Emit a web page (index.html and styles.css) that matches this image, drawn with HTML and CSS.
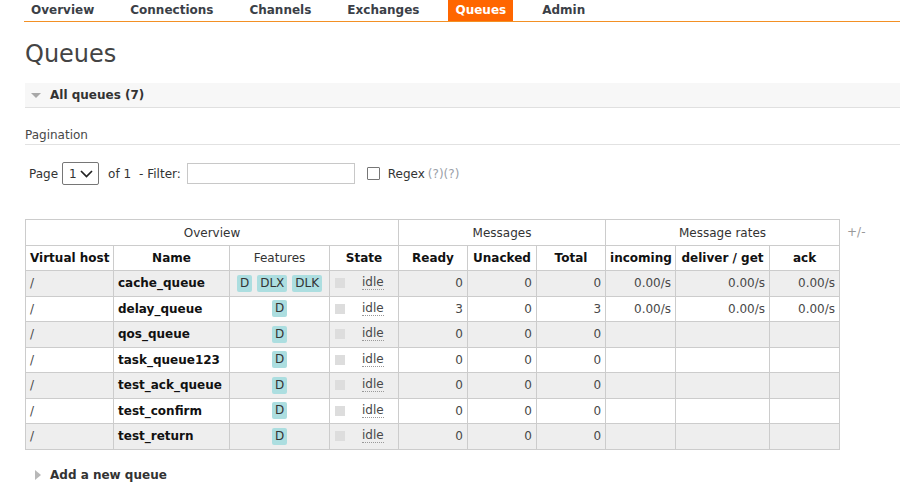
FILE: index.html
```html
<!DOCTYPE html>
<html>
<head>
<meta charset="utf-8">
<link rel="stylesheet" href="styles.css">
</head>
<body>
<div class="header">
  <ul class="tabs">
    <li><a class="tab">Overview</a></li>
    <li><a class="tab">Connections</a></li>
    <li><a class="tab">Channels</a></li>
    <li><a class="tab">Exchanges</a></li>
    <li><a class="tab selected">Queues</a></li>
    <li><a class="tab">Admin</a></li>
  </ul>
</div>
<div class="main">
  <h1 class="title">Queues</h1>
  <div class="section">
    <h2 class="section-head"><span class="tri-down"></span>All queues (7)</h2>
    <div class="section-body">
      <h3 class="sub-head">Pagination</h3>
      <div class="pager">
        <span class="lbl">Page</span>
        <span class="select"><span class="sel-val">1</span><svg class="chev" width="13" height="8" viewBox="0 0 13 8"><path d="M1 1 L6.5 6.5 L12 1" fill="none" stroke="#222" stroke-width="1.7"/></svg></span>
        <span class="lbl of">of 1</span>
        <span class="lbl filt">- Filter:</span>
        <span class="text-input"></span>
        <span class="check"></span>
        <span class="lbl regex">Regex</span>
        <span class="help">(?)(?)</span>
      </div>
      <div class="table-wrap">
        <table class="list">
          <colgroup>
            <col class="c-vhost"><col class="c-name"><col class="c-feat"><col class="c-state">
            <col class="c-num"><col class="c-num"><col class="c-num">
            <col class="c-inc"><col class="c-del"><col class="c-ack">
          </colgroup>
          <thead>
            <tr class="grp">
              <th colspan="4">Overview</th>
              <th colspan="3">Messages</th>
              <th colspan="3">Message rates</th>
            </tr>
            <tr class="cols">
              <th>Virtual host</th><th>Name</th><th class="norm">Features</th><th>State</th>
              <th>Ready</th><th>Unacked</th><th>Total</th>
              <th>incoming</th><th>deliver / get</th><th>ack</th>
            </tr>
          </thead>
          <tbody>
            <tr class="alt1">
              <td>/</td><td class="name">cache_queue</td>
              <td class="c"><span class="badges"><span class="badge">D</span><span class="badge">DLX</span><span class="badge">DLK</span></span></td>
              <td><span class="state"><span class="sq"></span><span class="idle">idle</span></span></td>
              <td class="r">0</td><td class="r">0</td><td class="r">0</td>
              <td class="r">0.00/s</td><td class="r">0.00/s</td><td class="r">0.00/s</td>
            </tr>
            <tr class="alt2">
              <td>/</td><td class="name">delay_queue</td>
              <td class="c"><span class="badges"><span class="badge">D</span></span></td>
              <td><span class="state"><span class="sq"></span><span class="idle">idle</span></span></td>
              <td class="r">3</td><td class="r">0</td><td class="r">3</td>
              <td class="r">0.00/s</td><td class="r">0.00/s</td><td class="r">0.00/s</td>
            </tr>
            <tr class="alt1">
              <td>/</td><td class="name">qos_queue</td>
              <td class="c"><span class="badges"><span class="badge">D</span></span></td>
              <td><span class="state"><span class="sq"></span><span class="idle">idle</span></span></td>
              <td class="r">0</td><td class="r">0</td><td class="r">0</td>
              <td></td><td></td><td></td>
            </tr>
            <tr class="alt2">
              <td>/</td><td class="name">task_queue123</td>
              <td class="c"><span class="badges"><span class="badge">D</span></span></td>
              <td><span class="state"><span class="sq"></span><span class="idle">idle</span></span></td>
              <td class="r">0</td><td class="r">0</td><td class="r">0</td>
              <td></td><td></td><td></td>
            </tr>
            <tr class="alt1">
              <td>/</td><td class="name">test_ack_queue</td>
              <td class="c"><span class="badges"><span class="badge">D</span></span></td>
              <td><span class="state"><span class="sq"></span><span class="idle">idle</span></span></td>
              <td class="r">0</td><td class="r">0</td><td class="r">0</td>
              <td></td><td></td><td></td>
            </tr>
            <tr class="alt2">
              <td>/</td><td class="name">test_confirm</td>
              <td class="c"><span class="badges"><span class="badge">D</span></span></td>
              <td><span class="state"><span class="sq"></span><span class="idle">idle</span></span></td>
              <td class="r">0</td><td class="r">0</td><td class="r">0</td>
              <td></td><td></td><td></td>
            </tr>
            <tr class="alt1">
              <td>/</td><td class="name">test_return</td>
              <td class="c"><span class="badges"><span class="badge">D</span></span></td>
              <td><span class="state"><span class="sq"></span><span class="idle">idle</span></span></td>
              <td class="r">0</td><td class="r">0</td><td class="r">0</td>
              <td></td><td></td><td></td>
            </tr>
          </tbody>
        </table>
        <span class="plusminus">+/-</span>
      </div>
    </div>
  </div>
  <div class="section">
    <h2 class="section-head collapsed"><span class="tri-right"></span>Add a new queue</h2>
  </div>
</div>
</body>
</html>
```
FILE: styles.css
```css
* { box-sizing: border-box; }
html, body { margin: 0; padding: 0; background: #fff; }
body {
  font-family: "DejaVu Sans", Verdana, sans-serif;
  font-size: 12px;
  color: #484848;
  overflow: hidden;
}
.header { height: 22px; }
.tabs {
  list-style: none;
  margin: 0 0 0 24px;
  padding: 0;
  display: flex;
  height: 22px;
  border-bottom: 1px solid #f39024;
}
.tabs li { margin-right: 22px; }
.tab {
  display: block;
  padding: 0 7px;
  line-height: 21px;
  height: 21px;
  font-weight: bold;
  color: #3b3f47;
}
.tab.selected { background: #ff6600; color: #fff; }

.main { padding-left: 25px; }
.title {
  font-size: 24px;
  font-weight: normal;
  color: #444;
  margin: 18px 0 15px;
  line-height: 28px;
}
.section-head {
  margin: 0;
  font-size: 12px;
  font-weight: bold;
  color: #333;
  background: #f7f7f7;
  border-bottom: 1px solid #e0e0e0;
  height: 25px;
  line-height: 24px;
  display: flex;
  align-items: center;
  padding-left: 6px;
}
.section-head.collapsed { background: transparent; border-bottom: none; margin-top: 13px; padding-left: 10px; }
.tri-down {
  width: 0; height: 0;
  border-left: 5px solid transparent;
  border-right: 5px solid transparent;
  border-top: 5px solid #a8a8a8;
  margin-right: 9px;
  margin-top: 1px;
}
.tri-right {
  width: 0; height: 0;
  border-top: 5px solid transparent;
  border-bottom: 5px solid transparent;
  border-left: 6px solid #b8b8b8;
  margin-right: 9px;
}
.sub-head {
  margin: 20px 0 0;
  font-size: 12px;
  font-weight: normal;
  line-height: 14px;
  padding-bottom: 2px;
  border-bottom: 1px solid #e2e2e2;
  color: #484848;
}
.pager {
  display: flex;
  align-items: center;
  margin-top: 17px;
  padding-left: 4px;
  height: 23px;
  line-height: 14px;
}
.lbl { color: #333; }
.select {
  display: inline-flex;
  align-items: center;
  width: 37px;
  height: 23px;
  border: 1px solid #767676;
  border-radius: 2px;
  margin-left: 4px;
  padding-left: 6px;
  color: #333;
}
.chev { margin-left: 3px; }
.of { margin-left: 9px; }
.filt { margin-left: 8px; }
.text-input {
  width: 168px;
  height: 21px;
  border: 1px solid #c8c8c8;
  margin-left: 6px;
  background: #fff;
}
.check {
  width: 13px;
  height: 13px;
  border: 1px solid #767676;
  border-radius: 1px;
  margin-left: 12px;
}
.regex { margin-left: 8px; }
.help { color: #9aa0a8; margin-left: 3px; }

.table-wrap {
  display: flex;
  align-items: flex-start;
  margin-top: 34px;
}
.list {
  border-collapse: collapse;
  table-layout: fixed;
  width: 814px;
}
.c-vhost { width: 88px; }
.c-name { width: 116px; }
.c-feat { width: 100px; }
.c-state { width: 69px; }
.c-num { width: 69px; }
.c-inc { width: 70px; }
.c-del { width: 94px; }
.c-ack { width: 70px; }
.list th, .list td {
  border: 1px solid #ccc;
  padding: 0 4px;
  white-space: nowrap;
  overflow: hidden;
}
.list th { font-weight: bold; color: #111; text-align: center; }
.list .grp th { font-weight: normal; color: #333; height: 26px; }
.list .cols th { height: 25px; }
.list th.norm { font-weight: normal; color: #333; }
.list td { height: 25.5px; color: #484848; }
.alt1 td { background: #eee; }
.alt2 td { background: #fff; }
.list td.name { font-weight: bold; color: #111; text-align: left; padding-left: 4px; }
.list td.c { text-align: center; }
.list td.r { text-align: right; }
.badges { display: inline-flex; gap: 5px; vertical-align: middle; }
.badge {
  display: inline-block;
  background: #acdee0;
  border-radius: 2px;
  line-height: 17px;
  height: 17px;
  padding: 0 3px;
  color: #333;
}
.state { display: flex; align-items: center; }
.sq { width: 10px; height: 10px; background: #ddd; margin-left: 1px; }
.idle {
  margin-left: 17px;
  line-height: 13px;
  border-bottom: 1px dotted #999;
  color: #484848;
}
.plusminus { color: #999; margin-left: 7px; line-height: 26px; }
```
